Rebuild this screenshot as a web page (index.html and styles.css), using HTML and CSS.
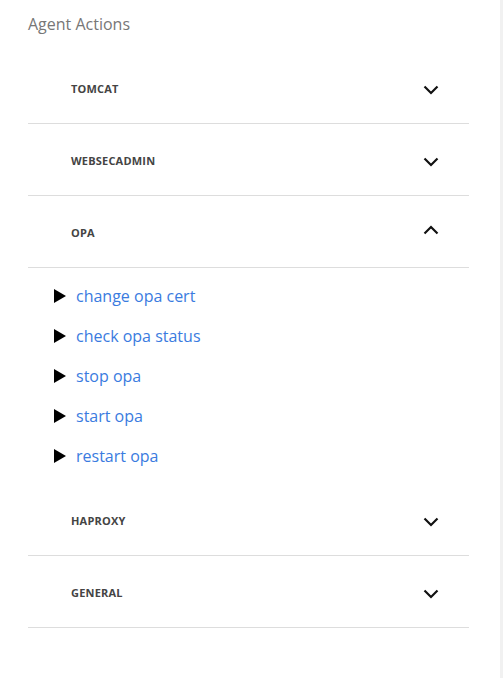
FILE: index.html
```html
<!DOCTYPE html>
<html>
<head>
<meta charset="utf-8">
<link rel="stylesheet" href="styles.css">
</head>
<body>
<div class="page">
  <main class="panel">
    <h1 class="title">Agent Actions</h1>
    <div class="accordion">
      <section class="section">
        <div class="head"><span class="label">TOMCAT</span>
          <svg class="chev" width="16" height="10" viewBox="0 0 16 10"><path d="M1.5 1.5 L8 8 L14.5 1.5" fill="none" stroke="#111" stroke-width="2.2"/></svg>
        </div>
      </section>
      <section class="section">
        <div class="head"><span class="label">WEBSECADMIN</span>
          <svg class="chev" width="16" height="10" viewBox="0 0 16 10"><path d="M1.5 1.5 L8 8 L14.5 1.5" fill="none" stroke="#111" stroke-width="2.2"/></svg>
        </div>
      </section>
      <section class="section open">
        <div class="head"><span class="label">OPA</span>
          <svg class="chev up" width="16" height="10" viewBox="0 0 16 10"><path d="M1.5 8.5 L8 2 L14.5 8.5" fill="none" stroke="#111" stroke-width="2.2"/></svg>
        </div>
      </section>
      <ul class="items">
        <li class="item"><span class="tri"></span><a class="link">change opa cert</a></li>
        <li class="item"><span class="tri"></span><a class="link">check opa status</a></li>
        <li class="item"><span class="tri"></span><a class="link">stop opa</a></li>
        <li class="item"><span class="tri"></span><a class="link">start opa</a></li>
        <li class="item"><span class="tri"></span><a class="link">restart opa</a></li>
      </ul>
      <section class="section">
        <div class="head"><span class="label">HAPROXY</span>
          <svg class="chev" width="16" height="10" viewBox="0 0 16 10"><path d="M1.5 1.5 L8 8 L14.5 1.5" fill="none" stroke="#111" stroke-width="2.2"/></svg>
        </div>
      </section>
      <section class="section">
        <div class="head"><span class="label">GENERAL</span>
          <svg class="chev" width="16" height="10" viewBox="0 0 16 10"><path d="M1.5 1.5 L8 8 L14.5 1.5" fill="none" stroke="#111" stroke-width="2.2"/></svg>
        </div>
      </section>
    </div>
  </main>
  <div class="scrollbar"></div>
</div>
</body>
</html>
```
FILE: styles.css
```css
* { box-sizing: border-box; }
html, body { margin: 0; padding: 0; background: #fff; }
body { font-family: "Open Sans", "Noto Sans", sans-serif; }
.page { display: flex; width: 503px; height: 678px; }
.panel { flex: 1; padding: 12px 31px 0 28px; }
.scrollbar { width: 3px; background: #f1f1f1; }
.title { margin: 0; font-size: 16px; font-weight: 400; color: #777; line-height: 24px; }
.accordion { margin-top: 16px; }
.section .head {
  height: 72px;
  border-bottom: 1px solid #ddd;
  display: flex;
  align-items: center;
  justify-content: space-between;
  padding: 2px 30px 0 43px;
}
.label { font-size: 11px; font-weight: 700; color: #444; letter-spacing: 0.2px; }
.chev { display: block; margin-top: 2px; }
.chev.up { margin-top: -6px; }
.items { list-style: none; margin: 0; padding: 8px 0 8px 26px; }
.item { height: 40px; display: flex; align-items: center; }
.tri {
  width: 0; height: 0;
  border-top: 7px solid transparent;
  border-bottom: 7px solid transparent;
  border-left: 12px solid #000;
  margin-right: 10px;
}
.link { color: #3a7be0; font-size: 16px; text-decoration: none; }
```
